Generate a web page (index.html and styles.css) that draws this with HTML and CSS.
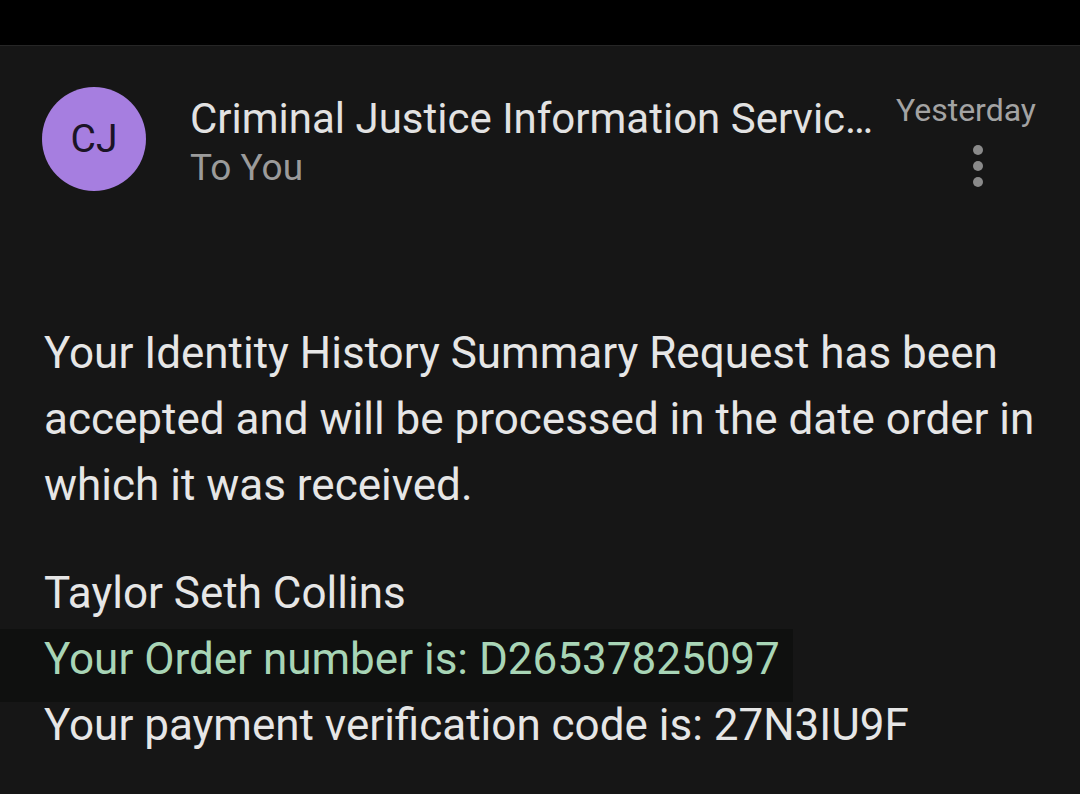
FILE: index.html
```html
<!DOCTYPE html>
<html lang="en">
<head>
    <meta charset="UTF-8">
    <title>Mail</title>
    <link rel="stylesheet" href="styles.css">
</head>
<body>
    <div class="status-bar"></div>
    <div class="mail">
        <div class="header">
            <div class="avatar">CJ</div>
            <div class="sender">
                <div class="name">Criminal Justice Information Servic…</div>
                <div class="to">To You</div>
            </div>
            <div class="meta">
                <div class="date">Yesterday</div>
                <div class="more">
                    <span></span><span></span><span></span>
                </div>
            </div>
        </div>

        <div class="body">
            <p class="intro">Your Identity History Summary Request has been accepted and will be processed in the date order in which it was received.</p>
            <div class="details">
                <div class="line">Taylor Seth Collins</div>
                <div class="line highlight">Your Order number is: D26537825097</div>
                <div class="line">Your payment verification code is: 27N3IU9F</div>
            </div>
        </div>
    </div>
</body>
</html>
```

FILE: styles.css
```css
html, body {
    margin: 0;
    padding: 0;
    background-color: #161616;
    font-family: Roboto, "Noto Sans", Arial, sans-serif;
    color: #e6e6e6;
    overflow: hidden;
}

.status-bar {
    height: 45px;
    background-color: #000;
    border-bottom: 1px solid #262626;
}

.mail {
    padding-top: 41px;
}

.header {
    display: flex;
    align-items: flex-start;
    padding: 0 44px 0 42px;
}

.avatar {
    width: 104px;
    height: 104px;
    border-radius: 50%;
    background-color: #a67ee0;
    color: #1b1426;
    font-size: 39px;
    display: flex;
    align-items: center;
    justify-content: center;
    flex-shrink: 0;
    margin-right: 44px;
}

.sender {
    flex: 1;
    padding-top: 7px;
    min-width: 0;
}

.name {
    font-size: 42px;
    color: #e2e2e2;
    line-height: 50px;
    white-space: nowrap;
}

.to {
    font-size: 37px;
    color: #9b9b9b;
    line-height: 48px;
}

.meta {
    display: flex;
    flex-direction: column;
    align-items: flex-end;
    margin-left: 20px;
    padding-top: 1px;
}

.date {
    font-size: 32px;
    color: #a3a3a3;
    line-height: 44px;
}

.more {
    display: flex;
    flex-direction: column;
    gap: 6px;
    margin-top: 13px;
    margin-right: 53px;
}

.more span {
    width: 10px;
    height: 10px;
    border-radius: 50%;
    background-color: #8a8a8a;
}

.body {
    padding-top: 128px;
}

.intro {
    margin: 0;
    padding: 0 20px 0 44px;
    font-size: 44px;
    line-height: 66px;
}

.details {
    margin-top: 42px;
    font-size: 44px;
    line-height: 66px;
}

.line {
    padding: 0 44px;
    white-space: nowrap;
}

.highlight {
    width: 705px;
    color: #a8d5b6;
    background: linear-gradient(#0f100f, #0f100f) 0 3px / 100% calc(100% - 3px) no-repeat;
    padding-bottom: 10px;
    margin-bottom: -10px;
}
```
